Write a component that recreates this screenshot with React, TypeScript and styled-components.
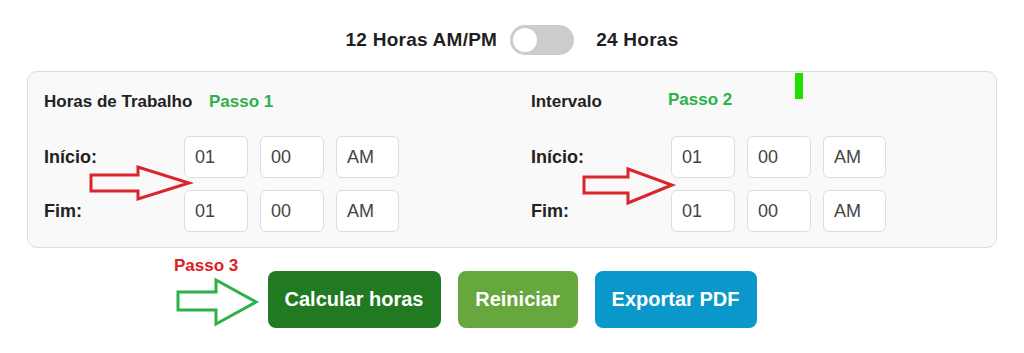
import React from "react";
import styled, { createGlobalStyle } from "styled-components";

const Global = createGlobalStyle`
  html, body { margin: 0; padding: 0; background: #ffffff; overflow: hidden; }
  body { font-family: "Liberation Sans", Arial, sans-serif; }
  * { box-sizing: border-box; }
`;

const Viewport = styled.div`
  width: 1024px;
  height: 353px;
  overflow: hidden;
  position: relative;
`;

const Card = styled.div`
  position: relative;
  margin: 0 -8px;
  height: 380px;
  border-radius: 14px;
  background: #fff;
  box-shadow: 0 0 6px rgba(0, 0, 0, 0.12);
  padding: 24px 35px 0;
  display: flex;
  flex-direction: column;
  align-items: center;
`;

const ToggleRow = styled.div`
  display: flex;
  align-items: center;
  height: 32px;
  font-size: 19px;
  letter-spacing: 0.25px;
  font-weight: 700;
  color: #1f1f1f;
`;

const Track = styled.div`
  width: 64px;
  height: 30px;
  border-radius: 15px;
  background: #cccccc;
  margin: 0 22px 0 13px;
  padding: 3px;
  display: flex;
  align-items: center;
`;

const Knob = styled.div`
  width: 24px;
  height: 24px;
  border-radius: 50%;
  background: #fff;
`;

const Panel = styled.div`
  margin-top: 15px;
  width: 970px;
  border: 1px solid #dddddd;
  border-radius: 10px;
  background: #f9f9f9;
  padding: 19px 16px 15px;
  display: grid;
  grid-template-columns: 1fr 1fr;
  column-gap: 38px;
`;

const Column = styled.div`
  display: flex;
  flex-direction: column;
`;

const Heading = styled.div`
  display: flex;
  align-items: center;
  height: 22px;
  font-size: 17px;
  font-weight: 700;
  color: #222;
  margin-bottom: 23px;
`;

const Rows = styled.div`
  display: flex;
  flex-direction: column;
  gap: 12px;
`;

const Row = styled.div`
  display: flex;
  align-items: center;
`;

const Label = styled.div`
  width: 140px;
  font-size: 18px;
  font-weight: 700;
  color: #222;
`;

const Inputs = styled.div`
  display: flex;
  gap: 12px;
`;

const Field = styled.div<{ $w?: number }>`
  width: ${(p) => p.$w ?? 64}px;
  height: 42px;
  background: #fff;
  border: 1px solid #dddddd;
  border-radius: 6px;
  padding-left: 10px;
  display: flex;
  align-items: center;
  font-size: 18px;
  color: #444;
`;

const Buttons = styled.div`
  margin-top: 23px;
  display: flex;
  gap: 17px;
`;

const Button = styled.button<{ $bg: string; $w: number }>`
  width: ${(p) => p.$w}px;
  height: 57px;
  border: none;
  border-radius: 8px;
  background: ${(p) => p.$bg};
  color: #fff;
  font-family: "Liberation Sans", Arial, sans-serif;
  font-size: 20px;
  font-weight: 700;
  cursor: pointer;
`;

const Note = styled.div<{ $color: string; $x: number; $y: number }>`
  position: absolute;
  left: ${(p) => p.$x}px;
  top: ${(p) => p.$y}px;
  font-size: 17px;
  font-weight: 700;
  color: ${(p) => p.$color};
  line-height: 20px;
`;

const Overlay = styled.svg`
  position: absolute;
  left: 0;
  top: 0;
  pointer-events: none;
`;

const Marker = styled.div`
  position: absolute;
  left: 795px;
  top: 73px;
  width: 8px;
  height: 26px;
  background: #22dd00;
`;

function TimeRow({ label }: { label: string }) {
  return (
    <Row>
      <Label>{label}</Label>
      <Inputs>
        <Field>01</Field>
        <Field>00</Field>
        <Field $w={63}>AM</Field>
      </Inputs>
    </Row>
  );
}

function arrow(x0: number, y0: number, y1: number, hx: number, hy0: number, hy1: number, tx: number, ty: number) {
  return `M${x0} ${y0} L${hx} ${y0} L${hx} ${hy0} L${tx} ${ty} L${hx} ${hy1} L${hx} ${y1} L${x0} ${y1} Z`;
}

export default function App() {
  return (
    <Viewport>
      <Global />
      <Card>
        <ToggleRow>
          <span>12 Horas AM/PM</span>
          <Track>
            <Knob />
          </Track>
          <span>24 Horas</span>
        </ToggleRow>
        <Panel>
          <Column>
            <Heading>Horas de Trabalho</Heading>
            <Rows>
              <TimeRow label="Início:" />
              <TimeRow label="Fim:" />
            </Rows>
          </Column>
          <Column>
            <Heading>Intervalo</Heading>
            <Rows>
              <TimeRow label="Início:" />
              <TimeRow label="Fim:" />
            </Rows>
          </Column>
        </Panel>
        <Buttons>
          <Button $bg="#217a21" $w={173}>Calcular horas</Button>
          <Button $bg="#66a83d" $w={120}>Reiniciar</Button>
          <Button $bg="#0a97c9" $w={162}>Exportar PDF</Button>
        </Buttons>
      </Card>
      <Note $color="#2eb04a" $x={209} $y={92}>Passo 1</Note>
      <Note $color="#2eb04a" $x={668} $y={90}>Passo 2</Note>
      <Note $color="#dd2020" $x={174} $y={256}>Passo 3</Note>
      <Marker />
      <Overlay width="1024" height="353" viewBox="0 0 1024 353">
        <path d={arrow(91, 175, 191, 138, 167, 199, 189, 183)} fill="none" stroke="#d9252b" strokeWidth="3" strokeLinejoin="miter" />
        <path d={arrow(584, 177, 193, 628, 169, 203, 672, 185)} fill="none" stroke="#d9252b" strokeWidth="3" strokeLinejoin="miter" />
        <path d={arrow(178, 292, 310, 216, 280, 324, 256, 302)} fill="none" stroke="#2eb04a" strokeWidth="3" strokeLinejoin="miter" />
      </Overlay>
    </Viewport>
  );
}
